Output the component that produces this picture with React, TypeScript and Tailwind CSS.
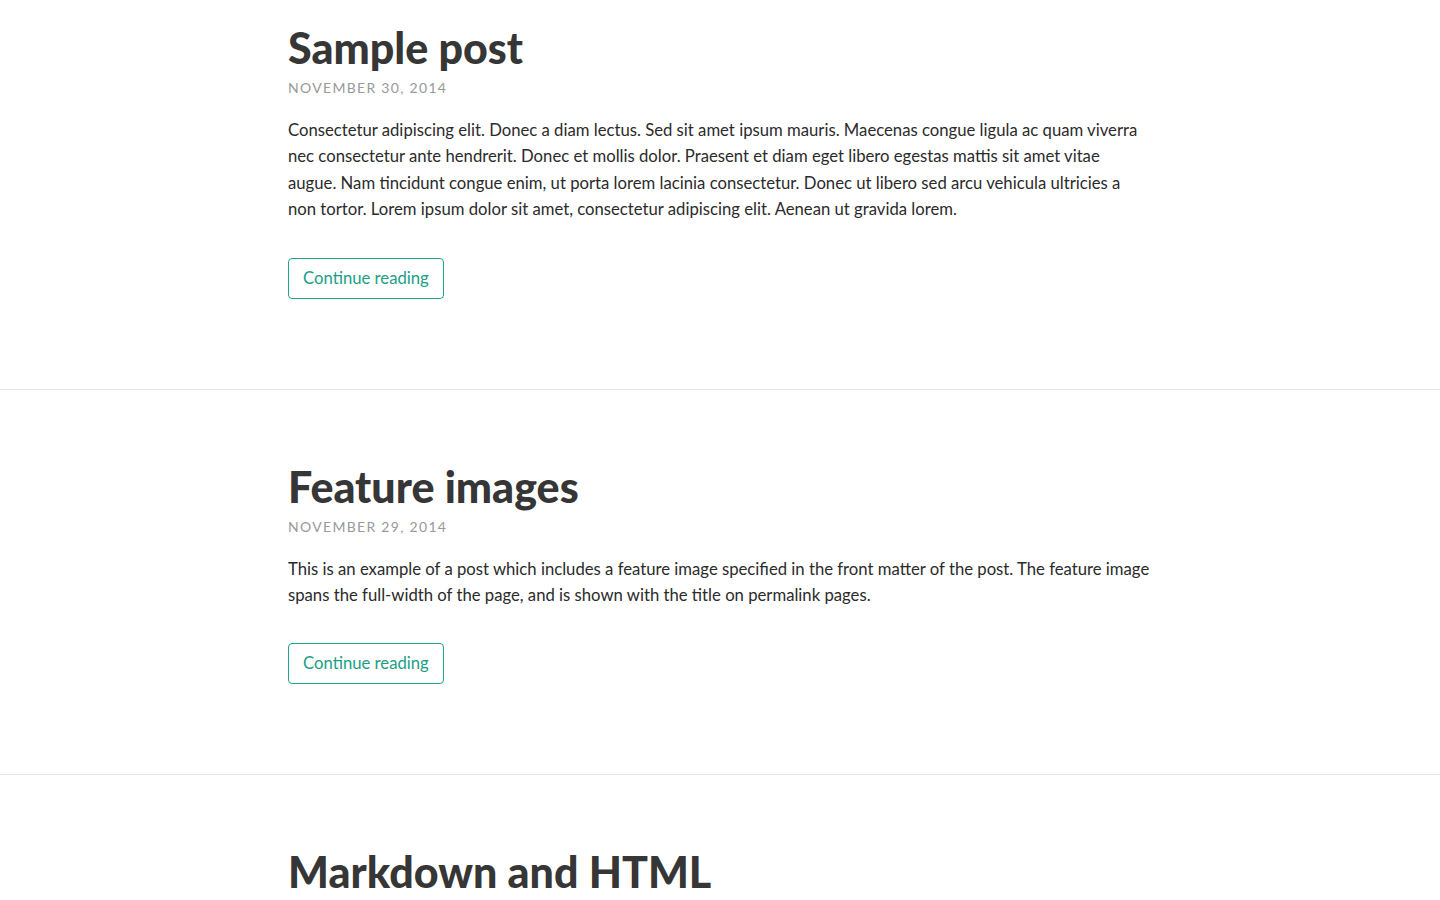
const posts = [
  {
    title: 'Sample post',
    date: 'November 30, 2014',
    body: 'Consectetur adipiscing elit. Donec a diam lectus. Sed sit amet ipsum mauris. Maecenas congue ligula ac quam viverra nec consectetur ante hendrerit. Donec et mollis dolor. Praesent et diam eget libero egestas mattis sit amet vitae augue. Nam tincidunt congue enim, ut porta lorem lacinia consectetur. Donec ut libero sed arcu vehicula ultricies a non tortor. Lorem ipsum dolor sit amet, consectetur adipiscing elit. Aenean ut gravida lorem.',
  },
  {
    title: 'Feature images',
    date: 'November 29, 2014',
    body: 'This is an example of a post which includes a feature image specified in the front matter of the post. The feature image spans the full-width of the page, and is shown with the title on permalink pages.',
  },
  {
    title: 'Markdown and HTML',
    date: 'November 28, 2014',
    body: 'Jekyll supports the use of Markdown with inline HTML tags which makes it easier to quickly write posts with Jekyll, without having to worry too much about text formatting.',
  },
];

export default function App() {
  return (
    <div className="min-h-screen bg-white text-[#333] [font-family:Lato,'Open_Sans',sans-serif]">
      {posts.map((p, i) => (
        <article key={p.title} className={`${i > 0 ? 'border-t border-[#e6e6e6] pt-[73px]' : 'pt-[24px]'} pb-[90px]`}>
          <div className="mx-auto w-[864px]">
            <h2 className="text-[43px] font-black leading-[48px] text-[#363636]">{p.title}</h2>
            <div className="mt-[6px] text-[14px] uppercase leading-[20px] tracking-[1.3px] text-[#999]">{p.date}</div>
            <p className="mt-[19px] text-[16.7px] leading-[26.4px] text-[#2b2b2b]">{p.body}</p>
            <a href="#" className="mt-[35px] inline-block rounded-[4px] border border-[#1fa68a] px-[14px] py-[9px] text-[16.7px] leading-[21px] text-[#1aa085]">
              Continue reading
            </a>
          </div>
        </article>
      ))}
    </div>
  );
}
